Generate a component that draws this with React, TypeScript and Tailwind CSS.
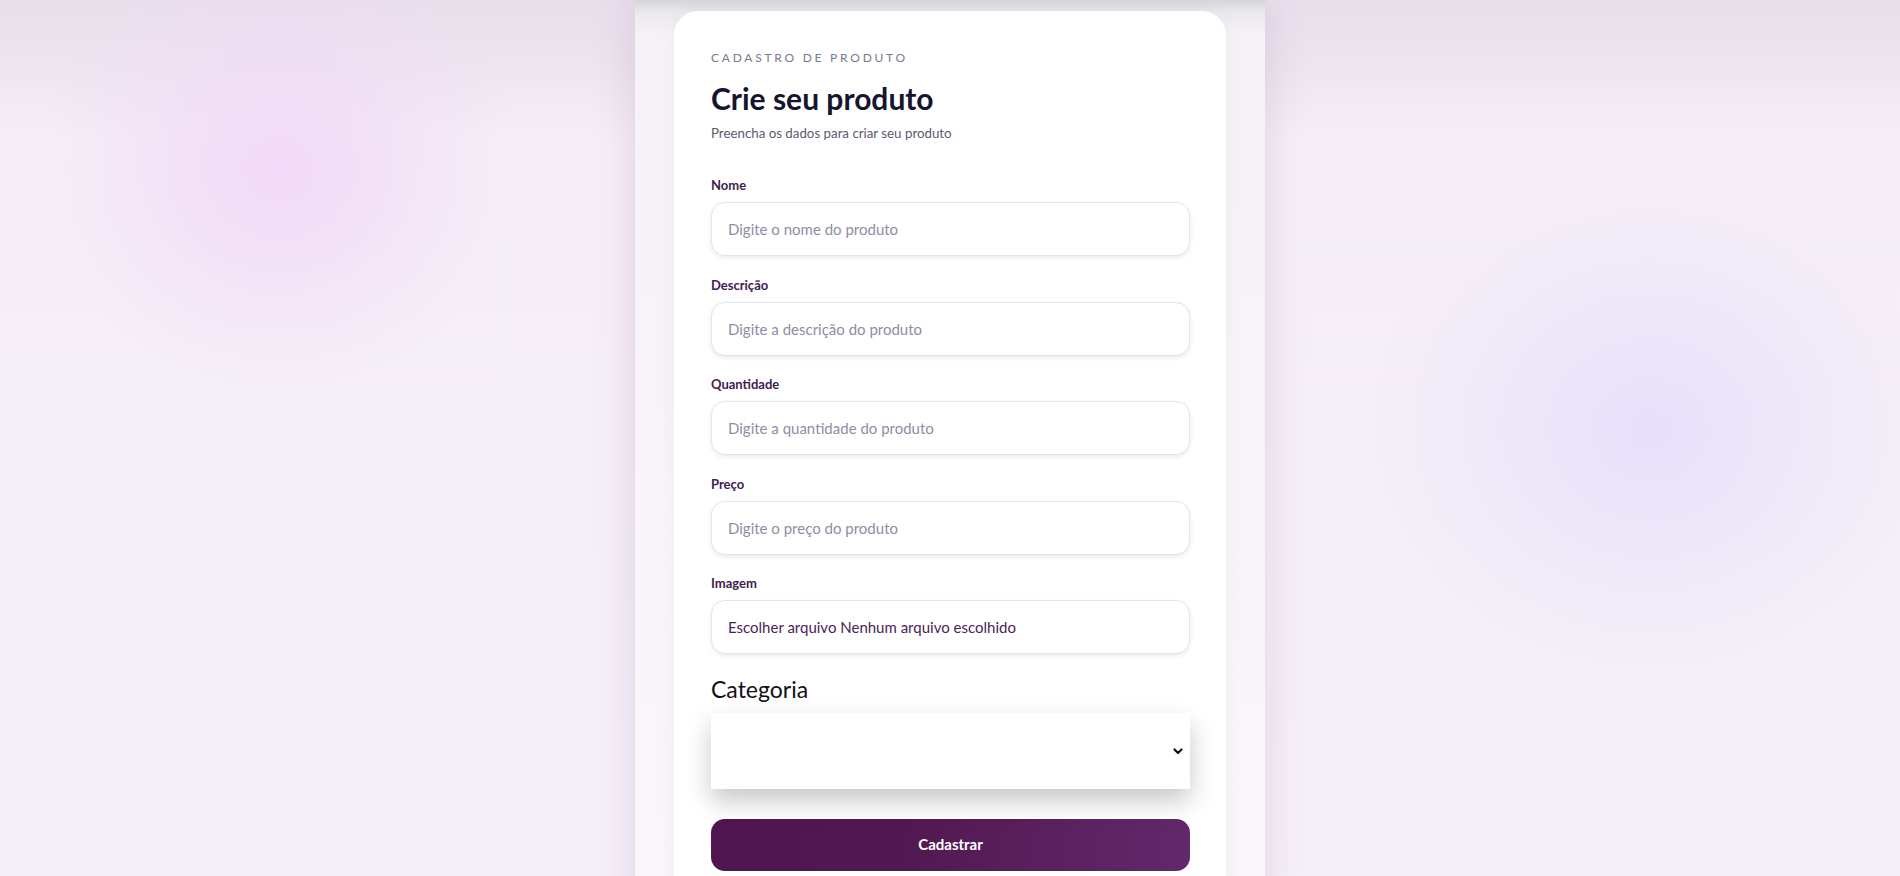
import React from "react";

function Field({ label, placeholder }: { label: string; placeholder: string }) {
  return (
    <div className="flex flex-col">
      <label className="mb-2 h-[18px] text-[13px] leading-[18px] font-bold text-[#3d2150]">{label}</label>
      <input
        placeholder={placeholder}
        className="h-[54px] w-full rounded-[14px] border border-[#e6e3eb] bg-white px-4 text-[15px] text-[#3b2150] placeholder:text-[#8f8da4] shadow-[0_2px_4px_rgba(70,50,100,0.10)] outline-none"
      />
    </div>
  );
}

export default function App() {
  return (
    <div className="min-h-screen w-full overflow-hidden font-[Lato,sans-serif] bg-[#f6f0f8] bg-[radial-gradient(ellipse_240px_220px_at_279px_170px,#f2d9f8,transparent),radial-gradient(ellipse_280px_250px_at_1650px_430px,#e8e0fb,transparent),linear-gradient(to_bottom,#e9dfec_0px,#eee5f0_70px,#f5eef7_140px,#f6f0f8_100%)]">
      <div className="mx-auto min-h-screen w-[630px] px-[39px] pt-[11px] shadow-[0_0_40px_rgba(110,60,120,0.16)] bg-[linear-gradient(to_bottom,#d6d5da_0px,#ebe9ee_12px,#f6f3f8_36px,#f9f7fa_100%)]">
        <div className="w-full rounded-[24px] bg-white pt-[38px] pl-[37px] pr-[36px] pb-10 shadow-[0_0_20px_rgba(80,60,100,0.05)]">
          <p className="text-[12px] leading-[18px] tracking-[0.23em] uppercase text-[#7b7991]">Cadastro de produto</p>
          <h1 className="mt-[12px] text-[30px] leading-[38px] font-bold text-[#15152f]">Crie seu produto</h1>
          <p className="mt-[6px] text-[13.3px] leading-[20px] text-[#5c5a72]">Preencha os dados para criar seu produto</p>

          <form className="mt-[33px] flex flex-col gap-[19.5px]" onSubmit={(e) => e.preventDefault()}>
            <Field label="Nome" placeholder="Digite o nome do produto" />
            <Field label="Descrição" placeholder="Digite a descrição do produto" />
            <Field label="Quantidade" placeholder="Digite a quantidade do produto" />
            <Field label="Preço" placeholder="Digite o preço do produto" />
            <div className="flex flex-col">
              <label className="mb-2 h-[18px] text-[13px] leading-[18px] font-bold text-[#3d2150]">Imagem</label>
              <div className="flex h-[54px] w-full items-center rounded-[14px] border border-[#e6e3eb] bg-white px-4 text-[15px] text-[#4a2457] shadow-[0_2px_4px_rgba(70,50,100,0.10)]">
                Escolher arquivo Nenhum arquivo escolhido
              </div>
            </div>
          </form>

          <p className="mt-[20px] text-[23px] leading-[30px] text-[#111118]">Categoria</p>
          <div className="relative mt-[9px] h-[75.5px] w-full bg-white shadow-[0_12px_24px_rgba(0,0,0,0.22)]">
            <select className="h-full w-full appearance-none bg-transparent px-4 text-[15px] outline-none">
              <option value=""></option>
            </select>
            <svg className="pointer-events-none absolute right-[6px] top-1/2 -translate-y-1/2" width="12" height="12" viewBox="0 0 12 12" fill="none">
              <path d="M2.5 4.5 L6 8 L9.5 4.5" stroke="#111" strokeWidth="2.2" strokeLinecap="round" strokeLinejoin="round" />
            </svg>
          </div>

          <button className="mt-[30px] h-[52px] w-full rounded-[14px] bg-[linear-gradient(90deg,#4e1550_0%,#521851_40%,#61296b_100%)] text-[15px] font-bold text-white">
            Cadastrar
          </button>
        </div>
      </div>
    </div>
  );
}
